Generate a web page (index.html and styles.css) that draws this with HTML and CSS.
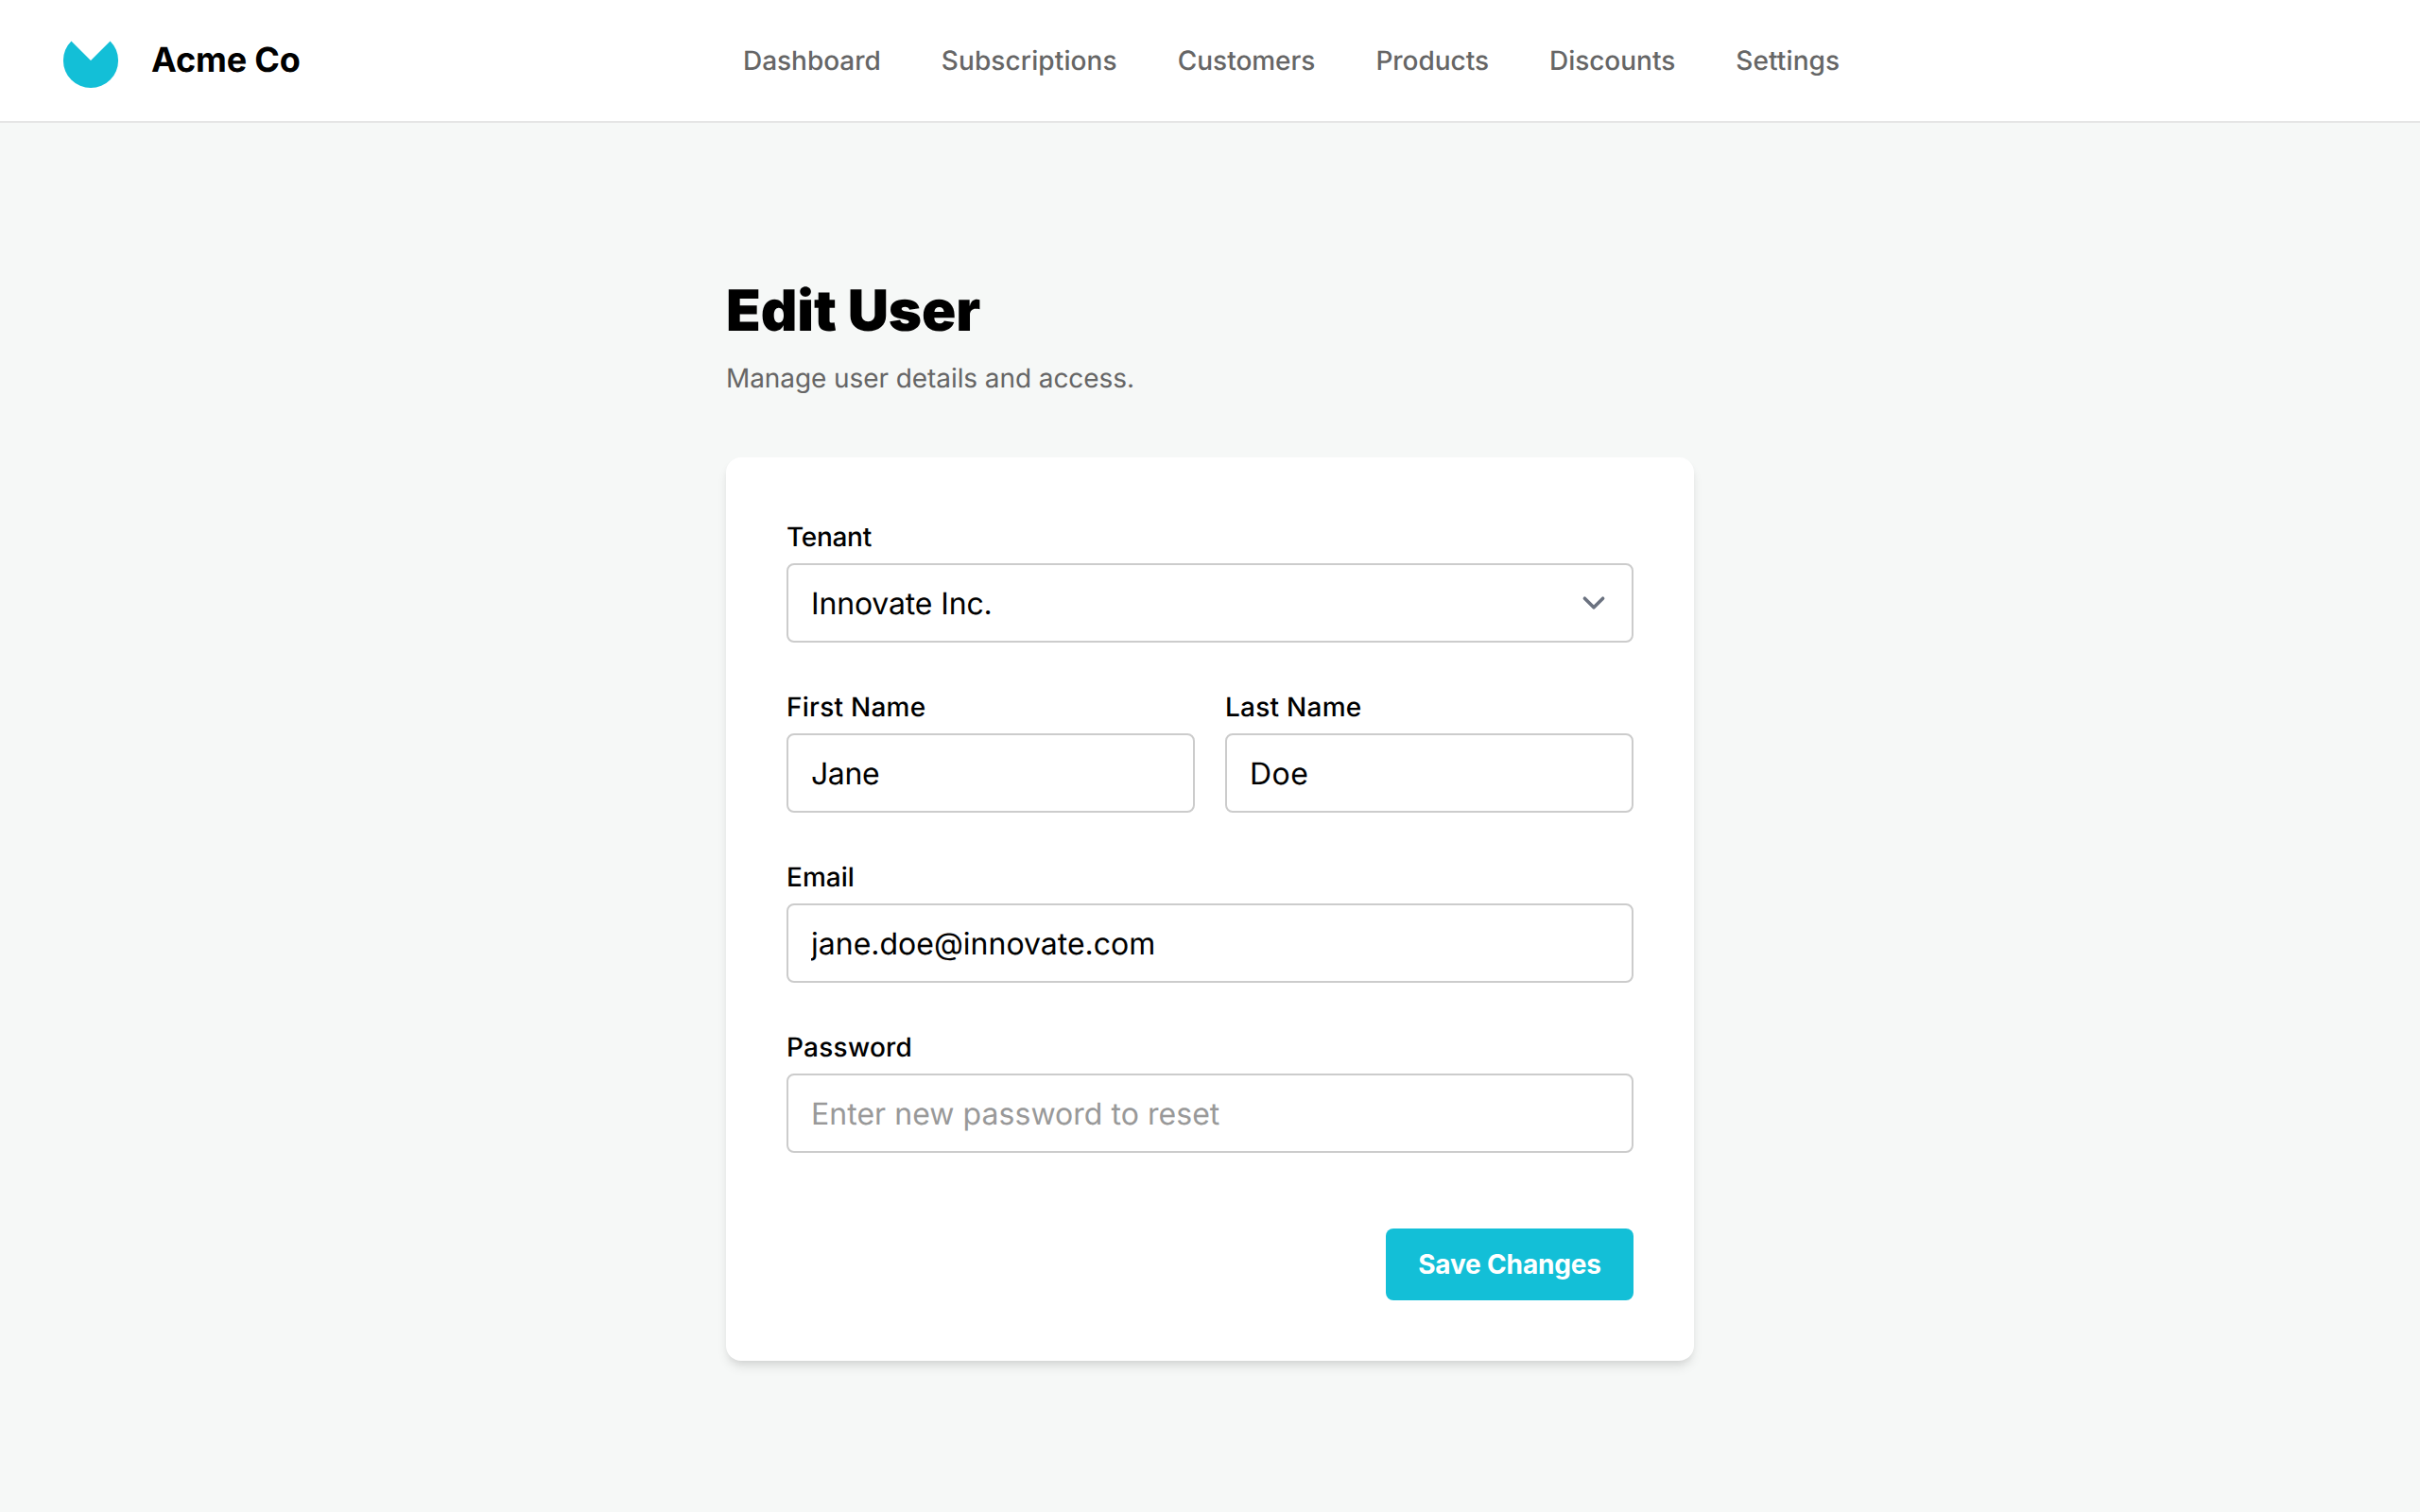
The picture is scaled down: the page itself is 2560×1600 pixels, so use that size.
FILE: index.html
```html
<!DOCTYPE html>
<html lang="en">
<head>
<meta charset="utf-8">
<title>Edit User - Acme Co</title>
<link rel="stylesheet" href="styles.css">
</head>
<body>
<header class="header">
  <div class="brand">
    <svg class="brand-logo" viewBox="0 0 48 48" fill="currentColor"><path d="M24 24 8.578 8.578A21.81 21.81 0 1 0 39.422 8.578Z"/></svg>
    <span class="brand-name">Acme Co</span>
  </div>
  <nav class="nav">
    <a class="nav-link">Dashboard</a>
    <a class="nav-link nav-link-wide">Subscriptions</a>
    <a class="nav-link">Customers</a>
    <a class="nav-link">Products</a>
    <a class="nav-link">Discounts</a>
    <a class="nav-link nav-link-wide">Settings</a>
  </nav>
</header>
<main class="main">
  <h1 class="title">Edit User</h1>
  <p class="subtitle">Manage user details and access.</p>
  <form class="card">
    <div class="field">
      <label class="label label-tight" for="tenant">Tenant</label>
      <div class="input select" id="tenant">
        <span class="select-value">Innovate Inc.</span>
        <svg class="chevron" viewBox="0 0 20 20" fill="none" stroke="currentColor" stroke-width="1.5" stroke-linecap="round" stroke-linejoin="round"><path d="M6 8l4 4 4-4"/></svg>
      </div>
    </div>
    <div class="row">
      <div class="field">
        <label class="label label-wide" for="first">First Name</label>
        <input class="input input-tight" id="first" type="text" value="Jane">
      </div>
      <div class="field">
        <label class="label label-wide" for="last">Last Name</label>
        <input class="input input-wide" id="last" type="text" value="Doe">
      </div>
    </div>
    <div class="field">
      <label class="label" for="email">Email</label>
      <input class="input" id="email" type="email" value="jane.doe@innovate.com">
    </div>
    <div class="field">
      <label class="label label-wide" for="password">Password</label>
      <input class="input" id="password" type="password" placeholder="Enter new password to reset">
    </div>
    <div class="actions">
      <button class="button" type="button">Save Changes</button>
    </div>
  </form>
</main>
</body>
</html>
```
FILE: styles.css
```css
*, *::before, *::after {
  box-sizing: border-box;
}

body {
  margin: 0;
  min-height: 1600px;
  background: #f6f8f7;
  color: #000;
  font-family: Inter, "Liberation Sans", sans-serif;
  font-size: 32px;
  line-height: 48px;
  text-rendering: geometricPrecision;
}

.header {
  display: grid;
  grid-template-columns: 722px 1fr;
  align-items: center;
  height: 130px;
  padding: 0 64px;
  background: #fff;
  border-bottom: 2px solid #e5e5e5;
}

.brand {
  display: flex;
  align-items: center;
  gap: 32px;
}

.brand-logo {
  width: 64px;
  height: 64px;
  color: #13bfd7;
}

.brand-name {
  padding-bottom: 2px;
  font-size: 36px;
  font-weight: 700;
  line-height: 56px;
  letter-spacing: -0.15px;
}

.nav {
  display: flex;
  gap: 64px;
}

.nav-link {
  color: #666;
  font-size: 28px;
  font-weight: 500;
  line-height: 40px;
  letter-spacing: -0.03px;
}

.nav-link-wide {
  letter-spacing: 0.12px;
}

.main {
  width: 1024px;
  margin: 0 auto;
  padding: 163px 0 160px;
}

.title {
  margin: 0;
  font-size: 60px;
  font-weight: 900;
  line-height: 72px;
  letter-spacing: -0.1px;
}

.subtitle {
  margin: 15px 0 64px;
  color: #666;
  font-size: 28px;
  line-height: 40px;
  letter-spacing: -0.08px;
}

.card {
  display: flex;
  flex-direction: column;
  gap: 48px;
  padding: 64px;
  background: #fff;
  border-radius: 16px;
  box-shadow: 0 8px 12px -2px rgba(0, 0, 0, 0.1), 0 4px 8px -4px rgba(0, 0, 0, 0.1);
}

.row {
  display: grid;
  grid-template-columns: 1fr 1fr;
  gap: 32px;
}

.field {
  display: flex;
  flex-direction: column;
  gap: 8px;
}

.label {
  font-size: 28px;
  font-weight: 500;
  line-height: 40px;
}

.label-tight {
  letter-spacing: -0.3px;
}

.label-wide {
  letter-spacing: 0.25px;
}

.input {
  width: 100%;
  height: 84px;
  padding: 16px 24px;
  background: #fff;
  border: 2px solid #ccc;
  border-radius: 8px;
  color: #000;
  font: inherit;
  text-rendering: inherit;
}

.input-tight {
  letter-spacing: -0.4px;
}

.input-wide {
  letter-spacing: 0.5px;
}

.input::placeholder {
  color: #999;
  opacity: 1;
  letter-spacing: 0.04px;
}

.select {
  display: flex;
  align-items: center;
  justify-content: space-between;
  padding-right: 16px;
}

.select-value {
  padding-top: 2px;
  letter-spacing: -0.15px;
}

.chevron {
  width: 48px;
  height: 48px;
  color: #6b7280;
}

.actions {
  display: flex;
  justify-content: flex-end;
  padding-top: 32px;
}

.button {
  width: 262px;
  height: 76px;
  padding: 0;
  background: #13bfd7;
  border: 0;
  border-radius: 8px;
  color: #fff;
  font: 700 28px/40px Inter, "Liberation Sans", sans-serif;
  letter-spacing: -0.16px;
}
```
